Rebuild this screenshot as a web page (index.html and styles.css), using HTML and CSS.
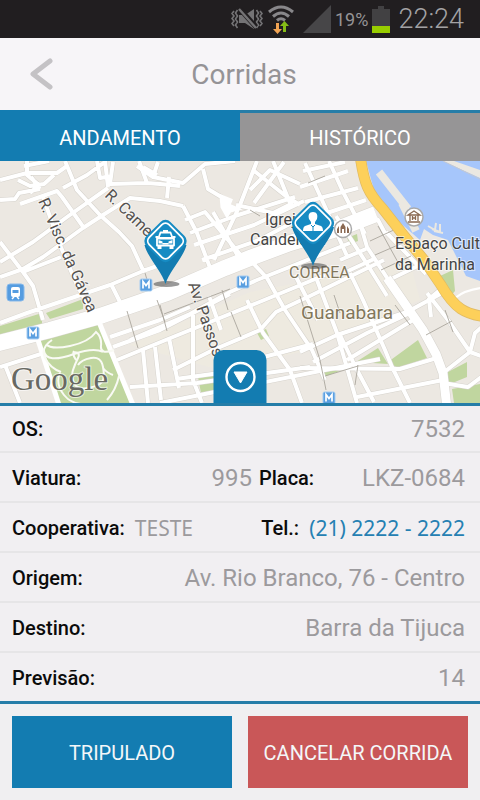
FILE: index.html
```html
<!DOCTYPE html>
<html lang="pt-BR">
<head>
<meta charset="utf-8">
<meta name="viewport" content="width=device-width, initial-scale=1">
<title>Corridas</title>
<link rel="stylesheet" href="styles.css">
</head>
<body>
<div class="status">
  <svg width="32" height="26" viewBox="0 0 32 26" aria-hidden="true">
    <g fill="none" stroke="#747375" stroke-width="1.6">
      <path d="M3 5l-2 2.500 2 2.500-2 2.500 2 2.500-2 2.500 2 2.500M6.500 4l-2 3 2 3-2 3 2 3-2 3 2 3M29 5l2 2.500-2 2.500 2 2.500-2 2.500 2 2.500-2 2.500M25.500 4l2 3-2 3 2 3-2 3 2 3-2 3"/>
    </g>
    <path d="M8 9h6l9-6v20l-9-6H8z" fill="#747375"/>
    <path d="M9 3l16 18" stroke="#211e20" stroke-width="5"/>
    <path d="M8 3l17 19" stroke="#747375" stroke-width="2.400"/>
  </svg>
  <svg width="28" height="30" viewBox="0 0 28 30" aria-hidden="true">
    <g fill="none" stroke="#88878a" stroke-width="3">
      <path d="M2 8Q14-2 26 8M6 12.500Q14 5.500 22 12.500M10 16.500Q14 13 18 16.500"/>
    </g>
    <path d="M9 19h3v6h3l-4.500 5L6 25h3z" fill="#f2a453"/>
    <path d="M16 28h3v-6h3l-4.500-5-4.500 5h3z" fill="#86bd16"/>
  </svg>
  <svg class="signal" width="28" height="28" viewBox="0 0 28 28" aria-hidden="true"><path d="M0 28L28 0v28z" fill="#474648"/></svg>
  <span class="percent">19%</span>
  <svg width="18" height="27" viewBox="0 0 18 27" aria-hidden="true">
    <path d="M6 0h6v3h6v24H0V3h6z" fill="#424143"/><path d="M0 20h18v7H0z" fill="#98cd00"/>
  </svg>
  <span class="clock">22:24</span>
</div>

<header class="header">
  <button class="back" type="button" aria-label="Voltar">
    <svg width="24" height="32" viewBox="0 0 24 32"><path d="M20 3L3 16l17 13" fill="none" stroke="#c4c2c5" stroke-width="5" stroke-linecap="round" stroke-linejoin="round"/></svg>
  </button>
  <h1>Corridas</h1>
</header>

<nav class="tabs">
  <button class="tab active" type="button">ANDAMENTO</button>
  <button class="tab" type="button">HISTÓRICO</button>
</nav>

<main class="main">
  <section class="map" aria-label="Mapa">
    <svg class="map-art" viewBox="0 161 480 242" preserveAspectRatio="xMidYMid slice">
      <defs>
        <g id="small">
          <path d="M0 180L27 173 57 173 67 166M27 161v14l12 10-9 8M24 166l25-5M18 180l12 6 14-2 10-9M20 204l37-13 5 6 22 31M0 200l15-1 4-6 21-4M40 189l-9-12M63 188l24-13 18-13M105 161l3 26M97 161l3 17 12-2M113 162l-3 22 37-1 13 1 20 2M139 161l8 22M143 167l14 8"/>
          <path d="M0 262L33 242 67 217 108 188M0 277L23 269 43 257 83 228 103 215 130 198 160 201 183 206M65 161L77 190 100 215 119 232 132 246 143 270M0 242L10 255 23 272 33 286 43 320M23 272l38-15M43 197L60 245 77 285 97 322M0 323L27 313 110 285 143 271 160 265M112 286l8 16"/>
          <path d="M137 166L153 177 183 183 205 164 235 161M169 177l-2 21M153 177l5-15M203 169l5 20 20 12M257 161L240 205 214 260M253 170L287 197 300 205M273 161L290 203M254 203l30-41M250 190l20-20 30 14M236 205l37 8 20-10M185 220l20-8 43 52M190 233l45-17 60-19M194 245l60-20 50-24M202 260l57-20 50-26M213 212l26 46M183 206l14 27 15 40"/>
          <path d="M305 163l22 48 20 45M329 161l14 31 22 42M300 187l48-16M305 202l53-14M312 218l54-18M323 232l45-17M340 260l26-11M348 271l26-12M303 171l42-9M336 216l31 48 20 32M360 223l7 24 26 40 15 20M386 235l-8-15q-7-5-13 2M386 232l40 42M393 278l35-17"/>
          <path d="M0 367L44 353M5 365l15 38M110 337L160 320 190 307M113 347L160 330 230 294M117 360L173 337 257 303 325 275M130 387L197 383 267 373 310 367M143 350l5 53M155 347l6 53M169 338l10 50M193 315l0 65 9 23M173 370L213 350 260 330 276 312 312 295 384 260M130 340L190 314 230 292 257 280 350 243M160 403l60-12 160-32M176 379l58-8"/>
          <path d="M209 296l12 34M247 300L263 333 290 370 302 403M252 262L267 278 285 310 312 350 325 380M260 358l53-14M295 275l23 45M317 280L337 333 357 403M350 273L363 300 385 350 392 367 410 403M300 352L337 335 407 312 444 292M313 362L367 333 410 313M300 368L400 369 440 357M347 360L413 320M340 335l16 33 18 34"/>
          <path d="M357 397L443 380M427 293l21 27 22 32 14 5M440 290l-11 9 2 18M443 373L470 352 475 333 484 325M443 383L468 387 484 375"/>
        </g>
        <path id="main-roads" d="M387 278L423 330 436 354 443 373 447 408"/>
        <path id="avenue" d="M-5 344L50 330 100 316 167 293 225 268 250 258 290 243 340 228 376 214"/>
        <g id="metro"><rect width="12" height="12" rx="1.500" fill="#5a9fe0" stroke="#a6cdf2"/><path d="M3 9.500v-7l3 4 3-4v7" fill="none" stroke="#fff" stroke-width="1.700"/></g>
        <g id="pin">
          <ellipse cx="1" cy="66" rx="13" ry="3" fill="#555" opacity=".6"/>
          <path d="M-21 27C-18 39-4 53 0 66 4 53 18 39 21 27z" fill="#137cb1"/>
          <rect x="-17" y="6" width="34" height="34" rx="7" transform="rotate(45 0 23)" fill="#168bc3"/>
          <rect x="-14" y="9" width="28" height="28" rx="5" transform="rotate(45 0 23)" fill="#168bc3" stroke="#fff" stroke-width="1.800"/>
        </g>
      </defs>
      <rect y="161" width="480" height="242" fill="#ece8e2"/>
      <path d="M130 345L250 292 410 262 420 300 310 350 220 370z" fill="#eeeae0"/>
      <g fill="#c0d69f">
        <path d="M0 326L42 313V324L0 336zM46 313L83 299V309L50 319zM38 341L98 324 132 403H58zM198 377l18-4v17l-15 3zM257 333l9-4 3 7-8 4zM356 362L378 348 388 364zM388 362L418 340 427 358 398 368zM316 370h26l-18 7zM444 374L467 362V377L450 384zM452 389L480 384V403H454zM440 276l13-6 2 21-6 7zM347 238l10-4 1 7-8 3z"/>
      </g>
      <path d="M366 161L374 190 398 221 420 240 424 229 433 235 448 240 466 276 480 281V161z" fill="#a6c6fb"/>
      <path d="M428 226l7 4 1-7M440 224v8l-8-3M434 231l9 2" fill="none" stroke="#ebe8e1" stroke-width="2"/>
      <path d="M379 172L408 209" stroke="#ebe8e1" stroke-width="8"/>
      <path d="M402 203l14 28" stroke="#ebe8e1" stroke-width="8"/>
      <path d="M443 161h37v17z" fill="#ebe8e1"/><path d="M454 161h26v9z" fill="#a6c6fb"/><path d="M443 161l37 18" stroke="#c3c8d2"/>
      <use href="#small" fill="none" stroke="#d6d3cd" stroke-width="5" stroke-linejoin="round"/>
      <use href="#main-roads" fill="none" stroke="#d6d3cd" stroke-width="10"/>
      <use href="#avenue" fill="none" stroke="#d8d5cf" stroke-width="17"/>
      <use href="#small" fill="none" stroke="#fff" stroke-width="4" stroke-linejoin="round"/>
      <use href="#main-roads" fill="none" stroke="#fff" stroke-width="9"/>
      <use href="#avenue" fill="none" stroke="#fff" stroke-width="16"/>
      <path d="M221 196l10 4-2 5 9 4-8 2-3 5-5-9z" fill="#fff" stroke="#fff" stroke-width="3"/>
      <path d="M99 322L133 405M38 340L59 405" fill="none" stroke="#fff" stroke-width="5"/>
      <g fill="none" stroke="#f9faf4" stroke-width="2">
        <path d="M46 344q5 6 24 2t26-14q6 5 5 14t13 4M44 351q2 13 30 3 20-7 29-2M52 340q-12 8-7 18t16 14M76 360q-4-6-2-9M73 352q8 0 5 6t-5 12 1 13 14 5 14-6 1-15-12-9-13 7M60 373q-5 10 4 22t34 9M103 368q4 5 10 7M119 376q-3 14-12 24"/>
      </g>
      <g fill="none" stroke="#aaa69d" stroke-width=".9">
        <path d="M127 311l11 37M157 300l8 22M164 314l66-25M160 305l7 26M222 290l6 20M231 312l10 25M300 296l20 64 6 30M325 376l33-10M334 295l6 18M358 365l-3 20M426 335l26-14M445 310l8 22M250 210l10 6M308 183l17-7M370 241l26-12M375 255l30-13M381 270l30-14M378 226l22 40M395 305l15 20M145 273l3 10"/>
      </g>
      <path d="M455 298q10-8 26-10" fill="none" stroke="#fff" stroke-width="2"/>
      <path d="M360 155C364 184 368 193 383 209L401 232 424 260 441 285C455 309 465 314 486 317" fill="none" stroke="#e1bb63" stroke-width="11"/>
      <path d="M360 155C364 184 368 193 383 209L401 232 424 260 441 285C455 309 465 314 486 317" fill="none" stroke="#fdd05a" stroke-width="9.500"/>
      <use href="#metro" x="140" y="279"/><use href="#metro" x="237" y="276"/><use href="#metro" x="27" y="327"/><use href="#metro" x="323" y="392"/>
      <g transform="translate(7 284)"><rect width="17" height="17" rx="3" fill="#559ce0" stroke="#87b9ea"/><rect x="4" y="3" width="9" height="10" rx="2" fill="#fff"/><path d="M5.500 6h6v3h-6z" fill="#559ce0"/><path d="M5 15l2-2M12 15l-2-2" stroke="#fff" stroke-width="1.500"/></g>
      <g fill="#fff" stroke="#aaa" stroke-width="1.500"><circle cx="414" cy="217" r="9"/><circle cx="343" cy="229" r="8.500"/></g>
      <path d="M408 215l6-4 6 4zM408 222h12M410 215v6M418 215v6M412.500 216v4M415.500 216v4M412.500 218h3" fill="none" stroke="#8a6952" stroke-width="1.300"/>
      <path d="M337 233v-4l2-3v7zM347 233v-7l2 3v4zM340.500 233v-6l2.500-4 2.500 4v6h-1.500v-4h-2v4z" fill="#8a6952"/>
      <g class="map-text">
        <text transform="translate(38 201) rotate(66)" font-size="16">R. Visc. da Gávea</text>
        <text transform="translate(104 196) rotate(44)" font-size="16">R. Came</text>
        <text transform="translate(188 284) rotate(71)" font-size="16">Av. Passos</text>
        <g class="place"><text x="265" y="225">Igreja</text><text x="250" y="245">Candelária</text><text x="395" y="249">Espaço Cultural</text><text x="395" y="270">da Marinha</text></g>
        <text class="area" x="289" y="278" font-size="16">CORREA</text>
        <text class="area" x="301" y="319" font-size="19">Guanabara</text>
        <text class="google" x="11" y="390">Google</text>
      </g>
      <g transform="translate(165.500 218)"><use href="#pin"/>
        <g fill="none" stroke="#fff" stroke-width="1.800" stroke-linejoin="round"><path d="M-7 20l2-5.500H5L7 20zM-8.500 20.500h17v7h-17z"/></g>
        <path d="M-2.500 12h5v2h-5zM-10 18h3v2h-3zM7 18h3v2H7zM-8 28h4v3h-4zM4 28h4v3H4z" fill="#fff"/>
        <path d="M-7 22l4 1.500v2h-4zM7 22l-4 1.500v2h4zM-3 25h6v1.500h-6z" fill="#fff"/>
      </g>
      <g transform="translate(313 200)"><use href="#pin"/>
        <path d="M0 12c4 0 5 3 4 7l-2 3v2l6 2q2 1 2 5h-20q0-4 2-5l6-2v-2l-2-3c-1-4 0-7 4-7z" fill="#fff"/><path d="M-2 25l2 2 2-2M0 26v5" fill="none" stroke="#168bc3"/>
      </g>
    </svg>
    <button class="handle" type="button" aria-label="Recolher detalhes">
      <svg width="32" height="32" viewBox="0 0 32 32"><circle cx="16" cy="16" r="14" fill="none" stroke="#fff" stroke-width="2.400"/><path d="M9.500 11h13L16 22z" fill="#fff" stroke="#fff" stroke-linejoin="round"/></svg>
    </button>
  </section>

  <dl class="details">
    <div class="row"><div class="field"><dt>OS:</dt><dd>7532</dd></div></div>
    <div class="row"><div class="field"><dt>Viatura:</dt><dd>995</dd></div><div class="field plate"><dt>Placa:</dt><dd>LKZ-0684</dd></div></div>
    <div class="row"><div class="field coop"><dt>Cooperativa:</dt><dd>TESTE</dd></div><div class="field tel"><dt>Tel.:</dt><dd><a href="tel:+552122222222">(21) 2222 - 2222</a></dd></div></div>
    <div class="row"><div class="field"><dt>Origem:</dt><dd>Av. Rio Branco, 76 - Centro</dd></div></div>
    <div class="row"><div class="field"><dt>Destino:</dt><dd>Barra da Tijuca</dd></div></div>
    <div class="row"><div class="field"><dt>Previsão:</dt><dd>14</dd></div></div>
  </dl>
</main>

<footer class="actions">
  <button class="action" type="button">TRIPULADO</button>
  <button class="action cancel" type="button">CANCELAR CORRIDA</button>
</footer>
</body>
</html>
```

FILE: styles.css
```css
* { box-sizing: border-box; }

:root {
  --blue: #137cb1;
  --line: #257da8;
}

body {
  margin: 0;
  min-height: 100vh;
  display: flex;
  flex-direction: column;
  background: #f0eff1;
  font-family: Roboto, "Liberation Sans", sans-serif;
}

button {
  margin: 0;
  padding: 0;
  border: 0;
  background: none;
  font: inherit;
  color: inherit;
}

.status {
  height: 38px;
  padding: 0 16px;
  display: flex;
  align-items: center;
  justify-content: flex-end;
  gap: 4px;
  background: #211e20;
}

.status .signal { margin-left: 4px; }

.percent {
  font-size: 18px;
  color: #959496;
}

.clock {
  margin-left: 4px;
  font-size: 27px;
  font-weight: 300;
  color: #a3a2a4;
}

.header {
  height: 72px;
  padding: 0 24px;
  display: grid;
  grid-template-columns: 40px 1fr 32px;
  align-items: center;
  background: #f7f5f8;
}

.back {
  width: 36px;
  height: 48px;
  display: flex;
  align-items: center;
  justify-content: center;
}

.header h1 {
  margin: 0;
  text-align: center;
  font-size: 28px;
  font-weight: 400;
  color: #959396;
}

.tabs {
  display: flex;
  border-top: 3px solid var(--line);
}

.tab {
  flex: 1;
  height: 48px;
  padding-top: 2px;
  background: #969596;
  color: #fff;
  font-size: 20px;
}

.tab.active {
  background: var(--blue);
  box-shadow: 0 -3px var(--blue);
}

.main {
  flex: 1;
  display: flex;
  flex-direction: column;
}

.map {
  flex: 1 0 240px;
  position: relative;
  overflow: hidden;
}

.map-art {
  position: absolute;
  inset: 0;
  width: 100%;
  height: 100%;
}

.map-text {
  fill: #55524f;
  stroke: #fff;
  stroke-width: 2px;
  stroke-opacity: 0.6;
  paint-order: stroke;
}

.place {
  fill: #444;
  font-size: 16px;
}

.area { fill: #82775b; }

.google {
  fill: #686963;
  font-family: "Liberation Serif", serif;
  font-size: 33px;
}

.handle {
  position: absolute;
  bottom: 0;
  left: 50%;
  width: 53px;
  height: 53px;
  transform: translateX(-50%);
  display: flex;
  align-items: center;
  justify-content: center;
  border-radius: 10px 10px 0 0;
  background: var(--blue);
}

.details {
  margin: 0;
  border-top: 3px solid var(--line);
  border-bottom: 3px solid var(--line);
  background: #f1eff2;
}

.row {
  height: 50px;
  padding: 2px 15px 0 12px;
  display: flex;
  align-items: center;
  gap: 7px;
  border-bottom: 2px solid #e6e5e7;
}

.row:first-child {
  height: 47px;
  padding-top: 0;
}

.row:last-child {
  height: 48px;
  border-bottom: 0;
}

.field {
  flex: 1;
  display: flex;
  align-items: center;
  justify-content: space-between;
  gap: 10px;
}

.field.plate { flex: 0 0 206px; }

.field.coop,
.field.tel {
  flex: none;
}

.field.tel { margin-left: auto; }

dt {
  font-size: 20px;
  font-weight: 500;
  color: #0b0b0b;
}

dd {
  margin: 0;
  font-size: 24px;
  color: #9c9a9d;
}

.coop dd,
.tel dd {
  font-family: "Noto Sans", sans-serif;
  font-size: 21px;
}

.tel a {
  color: #2580b2;
  text-decoration: none;
}

.actions {
  padding: 12px;
  display: grid;
  grid-template-columns: 1fr 1fr;
  gap: 16px;
}

.action {
  height: 72px;
  padding-top: 2px;
  background: var(--blue);
  color: #f4f7f9;
  font-size: 20px;
}

.action.cancel { background: #c95758; }
```
